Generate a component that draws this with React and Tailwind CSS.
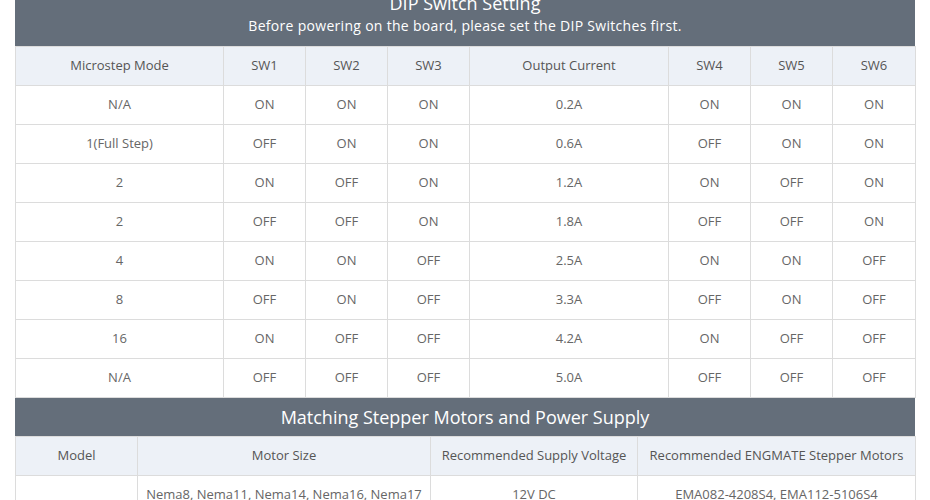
import React from "react";

const rows = [
  ["N/A", "ON", "ON", "ON", "0.2A", "ON", "ON", "ON"],
  ["1(Full Step)", "OFF", "ON", "ON", "0.6A", "OFF", "ON", "ON"],
  ["2", "ON", "OFF", "ON", "1.2A", "ON", "OFF", "ON"],
  ["2", "OFF", "OFF", "ON", "1.8A", "OFF", "OFF", "ON"],
  ["4", "ON", "ON", "OFF", "2.5A", "ON", "ON", "OFF"],
  ["8", "OFF", "ON", "OFF", "3.3A", "OFF", "ON", "OFF"],
  ["16", "ON", "OFF", "OFF", "4.2A", "ON", "OFF", "OFF"],
  ["N/A", "OFF", "OFF", "OFF", "5.0A", "OFF", "OFF", "OFF"],
];

const heads = ["Microstep Mode", "SW1", "SW2", "SW3", "Output Current", "SW4", "SW5", "SW6"];
const widths = ["w-[208px]", "w-[82px]", "w-[82px]", "w-[82px]", "w-[199px]", "w-[82px]", "w-[82px]", "w-[83px]"];

export default function App() {
  return (
    <div className="w-[930px] h-[500px] overflow-hidden bg-white px-[15px] text-[#666] font-['Open_Sans',sans-serif]">
      <div className="w-[900px]">
        <div className="h-[46px] bg-[#646e7a] flex flex-col justify-end items-center text-white pb-[10px]">
          <div className="text-[18px] leading-[26px]">DIP Switch Setting</div>
          <div className="text-[14px] leading-[20px] tracking-[0.3px]">Before powering on the board, please set the DIP Switches first.</div>
        </div>
        <table className="w-[900px] table-fixed border-collapse text-[13px]">
          <colgroup>
            {widths.map((w, i) => (
              <col key={i} className={w} />
            ))}
          </colgroup>
          <thead>
            <tr className="bg-[#edf1f7] h-[39px]">
              {heads.map((h, i) => (
                <th key={i} className="border border-[#dcdcdc] font-normal text-[#555] text-center p-0">{h}</th>
              ))}
            </tr>
          </thead>
          <tbody>
            {rows.map((r, ri) => (
              <tr key={ri} className="h-[39px]">
                {r.map((c, ci) => (
                  <td key={ci} className="border border-[#dcdcdc] text-center p-0">{c}</td>
                ))}
              </tr>
            ))}
          </tbody>
        </table>
        <div className="h-[38px] bg-[#646e7a] flex items-center justify-center text-white text-[18px]">
          Matching Stepper Motors and Power Supply
        </div>
        <table className="w-[900px] table-fixed border-collapse text-[13px]">
          <colgroup>
            <col className="w-[122px]" />
            <col className="w-[293px]" />
            <col className="w-[207px]" />
            <col className="w-[278px]" />
          </colgroup>
          <thead>
            <tr className="bg-[#edf1f7] h-[39px]">
              <th className="border border-[#dcdcdc] font-normal text-[#555] text-center p-0">Model</th>
              <th className="border border-[#dcdcdc] font-normal text-[#555] text-center p-0">Motor Size</th>
              <th className="border border-[#dcdcdc] font-normal text-[#555] text-center p-0">Recommended Supply Voltage</th>
              <th className="border border-[#dcdcdc] font-normal text-[#555] text-center p-0">Recommended ENGMATE Stepper Motors</th>
            </tr>
          </thead>
          <tbody>
            <tr className="h-[39px]">
              <td rowSpan={2} className="border border-[#dcdcdc] text-center p-0"></td>
              <td className="border border-[#dcdcdc] text-center p-0">Nema8, Nema11, Nema14, Nema16, Nema17</td>
              <td className="border border-[#dcdcdc] text-center p-0">12V DC</td>
              <td className="border border-[#dcdcdc] text-center p-0">EMA082-4208S4, EMA112-5106S4</td>
            </tr>
            <tr className="h-[39px]">
              <td className="border border-[#dcdcdc] text-center p-0"></td>
              <td className="border border-[#dcdcdc] text-center p-0"></td>
              <td className="border border-[#dcdcdc] text-center p-0"></td>
            </tr>
          </tbody>
        </table>
      </div>
    </div>
  );
}
